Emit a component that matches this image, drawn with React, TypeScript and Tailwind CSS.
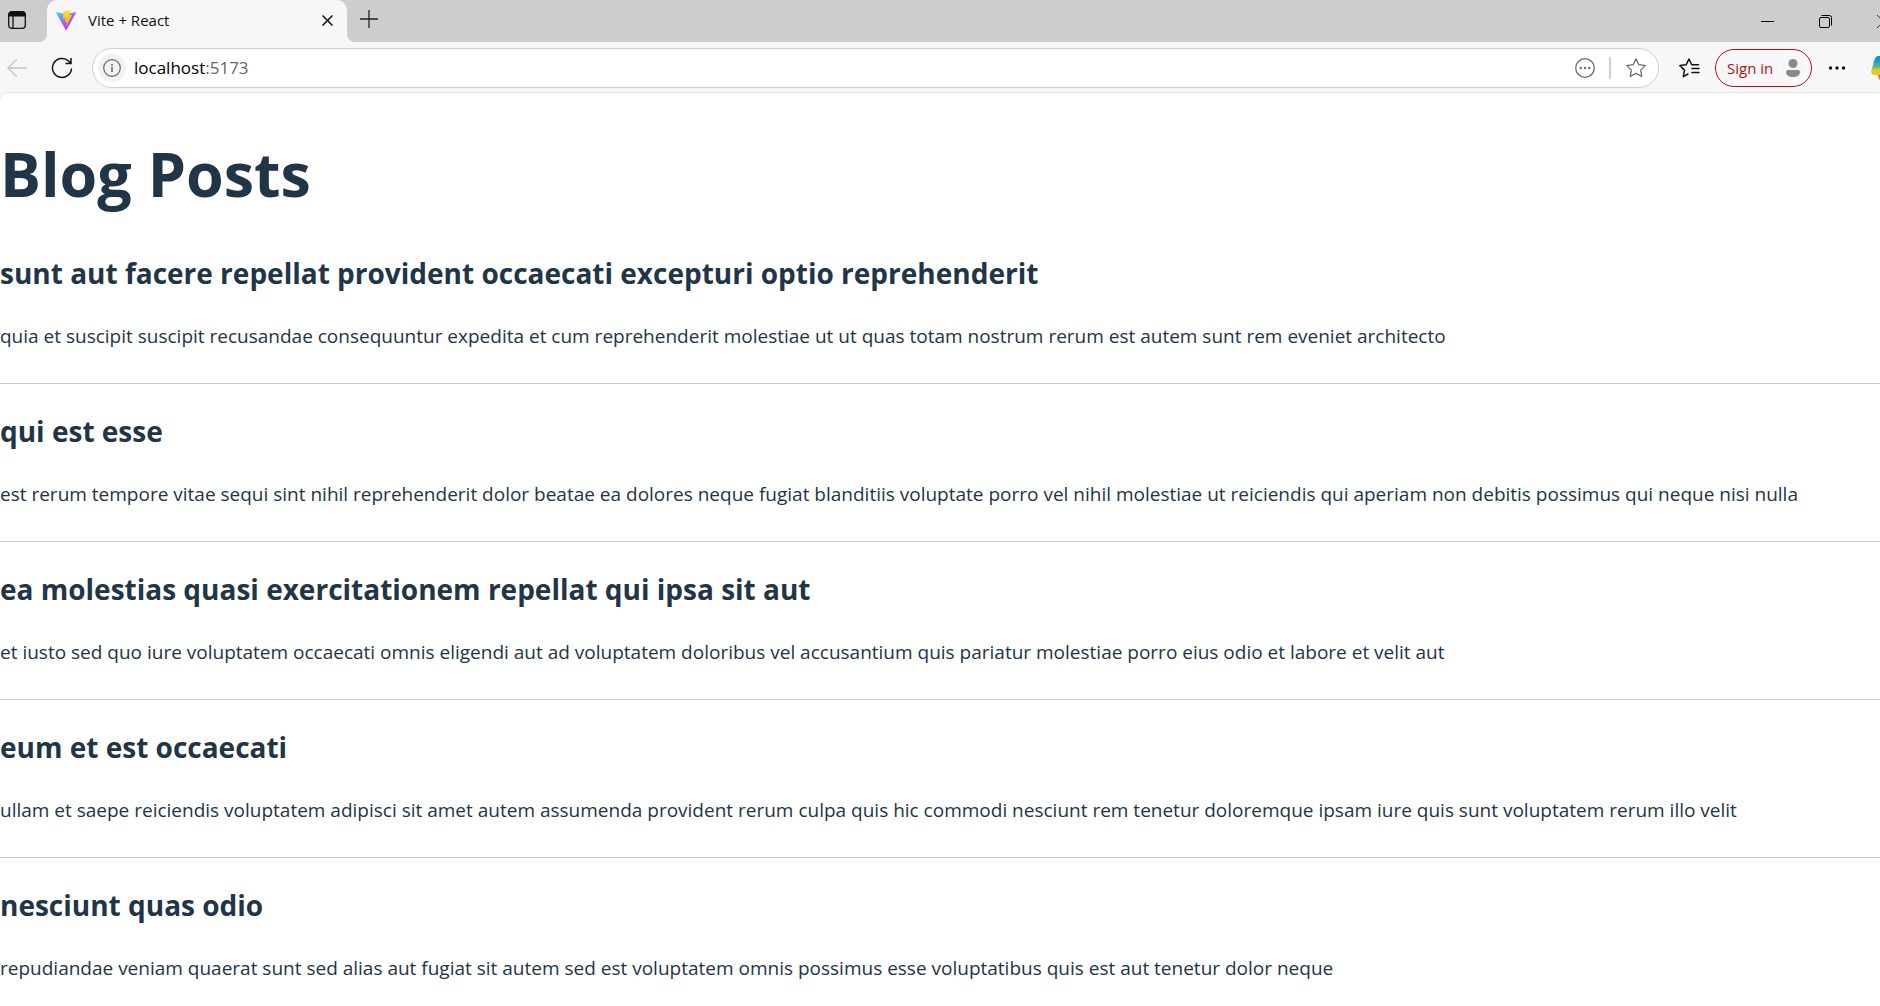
import React from "react";

const posts = [
  {
    title: "sunt aut facere repellat provident occaecati excepturi optio reprehenderit",
    body: "quia et suscipit suscipit recusandae consequuntur expedita et cum reprehenderit molestiae ut ut quas totam nostrum rerum est autem sunt rem eveniet architecto",
  },
  {
    title: "qui est esse",
    body: "est rerum tempore vitae sequi sint nihil reprehenderit dolor beatae ea dolores neque fugiat blanditiis voluptate porro vel nihil molestiae ut reiciendis qui aperiam non debitis possimus qui neque nisi nulla",
  },
  {
    title: "ea molestias quasi exercitationem repellat qui ipsa sit aut",
    body: "et iusto sed quo iure voluptatem occaecati omnis eligendi aut ad voluptatem doloribus vel accusantium quis pariatur molestiae porro eius odio et labore et velit aut",
  },
  {
    title: "eum et est occaecati",
    body: "ullam et saepe reiciendis voluptatem adipisci sit amet autem assumenda provident rerum culpa quis hic commodi nesciunt rem tenetur doloremque ipsam iure quis sunt voluptatem rerum illo velit",
  },
  {
    title: "nesciunt quas odio",
    body: "repudiandae veniam quaerat sunt sed alias aut fugiat sit autem sed est voluptatem omnis possimus esse voluptatibus quis est aut tenetur dolor neque",
  },
];

function ViteLogo() {
  return (
    <svg className="h-5 w-5 shrink-0" viewBox="0 0 256 257" aria-hidden="true">
      <defs>
        <linearGradient id="viteBody" x1="-.828%" x2="57.636%" y1="7.652%" y2="78.411%">
          <stop offset="0%" stopColor="#41D1FF" />
          <stop offset="100%" stopColor="#BD34FE" />
        </linearGradient>
        <linearGradient id="viteBolt" x1="43.376%" x2="50.316%" y1="2.242%" y2="89.03%">
          <stop offset="0%" stopColor="#FFEA83" />
          <stop offset="8.333%" stopColor="#FFDD35" />
          <stop offset="100%" stopColor="#FFA800" />
        </linearGradient>
      </defs>
      <path fill="url(#viteBody)" d="M255.153 37.938L134.897 252.976c-2.483 4.44-8.862 4.466-11.382.048L.875 37.958c-2.746-4.814 1.371-10.646 6.827-9.67l120.385 21.517a6.537 6.537 0 0 0 2.322-.004l117.867-21.483c5.438-.991 9.574 4.796 6.877 9.62Z" />
      <path fill="url(#viteBolt)" d="M185.432.063L96.44 17.501a3.268 3.268 0 0 0-2.634 3.014l-5.474 92.456a3.268 3.268 0 0 0 3.997 3.378l24.777-5.718c2.318-.535 4.413 1.507 3.936 3.838l-7.361 36.047c-.495 2.426 1.782 4.5 4.151 3.78l15.304-4.649c2.372-.72 4.652 1.36 4.15 3.788l-11.698 56.621c-.732 3.542 3.979 5.473 5.943 2.437l1.313-2.028l72.516-144.72c1.215-2.423-.88-5.186-3.54-4.672l-25.505 4.922c-2.396.462-4.435-1.77-3.759-4.114l16.646-57.705c.677-2.35-1.37-4.583-3.769-4.113Z" />
    </svg>
  );
}

function TabBar() {
  return (
    <div className="flex h-[42px] items-end bg-[#cdcdcd]">
      <div className="flex h-full w-[47px] items-end">
        <div className="flex h-full flex-1 items-center pb-[2px] pl-2">
          <button aria-label="Tab actions">
            <svg className="h-[18px] w-[18px]" viewBox="0 0 18 18" fill="none" stroke="#111">
              <rect x="0.7" y="0.7" width="16.6" height="16.6" rx="3" strokeWidth="1.3" />
              <path d="M1 3.5a2.5 2.5 0 0 1 2.5-2.5h11A2.5 2.5 0 0 1 17 3.5V5H1z" fill="#111" />
              <path d="M5 5v12" strokeWidth="1.3" />
            </svg>
          </button>
        </div>
        <svg className="h-2 w-2" viewBox="0 0 8 8" aria-hidden="true"><path d="M8 0v8H0a8 8 0 0 0 8-8z" fill="#f7f7f7" /></svg>
      </div>
      <div className="flex h-full w-[300px] items-center rounded-t-[10px] bg-[#f7f7f7] pb-[2px] pr-3 pl-[9px]">
        <ViteLogo />
        <span className="ml-3 flex-1 text-[15px] leading-5 text-[#111]">Vite + React</span>
        <button aria-label="Close tab" className="p-[2px]">
          <svg className="h-[11px] w-[11px]" viewBox="0 0 11 11" stroke="#111" strokeWidth="1.5"><path d="M.5.5l10 10M10.5.5l-10 10" /></svg>
        </button>
      </div>
      <svg className="h-2 w-2" viewBox="0 0 8 8" aria-hidden="true"><path d="M0 0v8h8a8 8 0 0 1-8-8z" fill="#f7f7f7" /></svg>
      <div className="flex h-full flex-1 items-center pb-1 pl-[5px]">
        <button aria-label="New tab">
          <svg className="h-[18px] w-[18px]" viewBox="0 0 18 18" stroke="#222" strokeWidth="1.3"><path d="M9 0v18M0 9h18" /></svg>
        </button>
      </div>
      <div className="flex h-full shrink-0 items-center overflow-hidden">
        <button aria-label="Minimize" className="mr-[45px]">
          <svg className="h-[13px] w-[13px]" viewBox="0 0 13 13" stroke="#000"><path d="M0 6.5h13" /></svg>
        </button>
        <button aria-label="Restore" className="mr-[45px]">
          <svg className="h-[13px] w-[13px]" viewBox="0 0 13 13" fill="none" stroke="#000"><rect x=".5" y="2.5" width="10" height="10" rx="1.5" /><path d="M2.5 .5h8a2 2 0 0 1 2 2v8" /></svg>
        </button>
        <button aria-label="Close window" className="w-[3px] overflow-hidden">
          <svg className="h-[13px] w-[13px] max-w-none" viewBox="0 0 13 13" stroke="#333"><path d="M0 0l13 13M13 0L0 13" /></svg>
        </button>
      </div>
    </div>
  );
}

function Toolbar() {
  return (
    <div className="flex h-[51px] items-center overflow-hidden bg-[#f7f7f7] pl-[7px]">
      <button aria-label="Back" disabled>
        <svg className="h-5 w-5" viewBox="0 0 20 20" fill="none" stroke="#c4c4c4" strokeWidth="1.3"><path d="M20 10H1M10 1L1 10l9 9" /></svg>
      </button>
      <button aria-label="Refresh" className="ml-6">
        <svg className="h-[22px] w-[22px]" viewBox="0 0 22 22" fill="none" stroke="#111" strokeWidth="1.5"><path d="M20.5 11.5a9.5 9.5 0 1 1-3-7.5l2.5 2.5M20 1v5.5h-5.5" /></svg>
      </button>
      <form className="ml-[19px] flex h-10 flex-1 items-center rounded-full border border-[#cfcfcf] bg-white pr-3 pl-[5px]">
        <button type="button" aria-label="Site information" className="flex h-7 w-7 items-center justify-center rounded-full bg-[#f2f2f2]">
          <svg className="h-[18px] w-[18px]" viewBox="0 0 18 18" fill="none" stroke="#666" strokeWidth="1.2"><circle cx="9" cy="9" r="8.3" /><path d="M9 8v5M9 5v1.7" strokeWidth="1.6" /></svg>
        </button>
        <div className="ml-2 flex-1 text-[17px] leading-6 text-[#666]" role="textbox" aria-label="Address" contentEditable suppressContentEditableWarning spellCheck={false}><span className="text-black">localhost</span>:5173</div>
        <button type="button" aria-label="More options">
          <svg className="h-5 w-5" viewBox="0 0 20 20" fill="none" stroke="#6b6b6b" strokeWidth="1.3"><circle cx="10" cy="10" r="9.3" /><g fill="#6b6b6b" stroke="none"><circle cx="5.7" cy="10" r="1.2" /><circle cx="10" cy="10" r="1.2" /><circle cx="14.3" cy="10" r="1.2" /></g></svg>
        </button>
        <span className="mr-[15px] ml-[14px] h-[22px] w-[2px] bg-[#d0d0d0]" />
        <button type="button" aria-label="Add to favorites">
          <svg className="h-5 w-5" viewBox="0 0 20 20" fill="none" stroke="#6b6b6b" strokeWidth="1.3" strokeLinejoin="round"><path d="M10 .8l2.8 5.9 6.5.9-4.7 4.5 1.2 6.4L10 15.4l-5.8 3.1 1.2-6.4L.7 7.6l6.5-.9z" /></svg>
        </button>
      </form>
      <button aria-label="Favorites" className="ml-5">
        <svg className="h-[20px] w-[21px]" viewBox="0 0 21 20" fill="none" stroke="#111" strokeWidth="1.5" strokeLinejoin="round" strokeLinecap="round"><path d="M19.5 6.8h-6.8L10 1 7.2 6.700.8 7.5l4.7 4.6-1.2 6.6L9 16M13 10.5h7M13 14.5h7" /></svg>
      </button>
      <button className="ml-[15px] flex h-[38px] w-[97px] items-center rounded-full border border-[#b01318] pl-[11px] text-[15px] leading-5 text-[#b01318]">
        <span className="flex-1 text-left">Sign in</span>
        <span className="mr-[4px] flex h-[28px] w-[28px] items-center justify-center rounded-full border border-white/80">
          <svg className="h-[18px] w-[14px]" viewBox="0 0 14 18" fill="#8a8a8a"><circle cx="7" cy="4.5" r="4.5" /><path d="M0 13a2 2 0 0 1 2-2h10a2 2 0 0 1 2 2c0 3-3 5-7 5s-7-2-7-5z" /></svg>
        </span>
      </button>
      <button aria-label="Settings and more" className="ml-4">
        <svg className="h-4 w-[18px]" viewBox="0 0 18 16" fill="#111"><circle cx="2.5" cy="8" r="1.7" /><circle cx="9" cy="8" r="1.7" /><circle cx="15.5" cy="8" r="1.7" /></svg>
      </button>
      <button aria-label="Copilot" className="ml-[25px] w-[9px] overflow-hidden">
        <svg className="h-[24px] w-[9px]" viewBox="0 0 9 24">
          <defs><linearGradient id="copilot" x1="0" y1="0" x2="0" y2="1"><stop offset="0" stopColor="#1f7fe8" /><stop offset=".3" stopColor="#17a3dc" /><stop offset=".55" stopColor="#54b884" /><stop offset=".75" stopColor="#e8c81e" /></linearGradient></defs>
          <path d="M9 0H8C5 0 4 2 3 5L.5 14C-.5 17 1 19 4 19h5z" fill="url(#copilot)" />
          <path d="M7 19h2v5C7.5 23 7 21 7 19z" fill="#f5693f" />
        </svg>
      </button>
    </div>
  );
}

export default function App() {
  return (
    <div className="h-screen overflow-hidden bg-[#f7f7f7] font-['Open_Sans','Noto_Sans',sans-serif]">
      <header>
        <TabBar />
        <Toolbar />
      </header>
      <main className="rounded-tl-lg bg-white pt-[46px] text-[#213547] shadow-[0_-1px_1px_#e4e4e4]">
        <h1 className="text-[61px] leading-[70px] font-bold">Blog Posts</h1>
        <div className="mt-[41px]">
          {posts.map((post) => (
            <article key={post.title} className="mb-6 border-b border-[#ccc] pb-8">
              <h2 className="text-[28px] leading-[46px] font-bold whitespace-nowrap">{post.title}</h2>
              <p className="mt-[25px] text-[19px] leading-[30px] whitespace-nowrap">{post.body}</p>
            </article>
          ))}
        </div>
      </main>
    </div>
  );
}
